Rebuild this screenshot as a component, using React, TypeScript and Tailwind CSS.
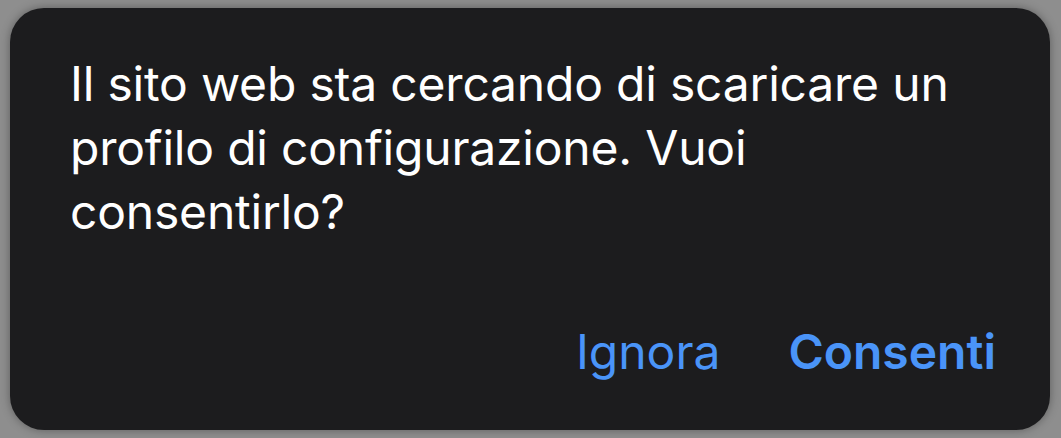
export default function App() {
  return (
    <div className="flex h-[438px] w-[1061px] items-start bg-[#8e8e8e] pl-[10px] pt-[8px]">
      <div
        className="flex h-[422px] w-[1040px] flex-col rounded-[34px] bg-[#1c1c1e] pl-[60px] pr-[54px] pt-[44px] shadow-[0_0_10px_rgba(0,0,0,0.35)]"
        style={{ fontFamily: "Inter, 'Noto Sans', sans-serif" }}
      >
        <p className="text-[48px] leading-[64px] tracking-[-0.2px] text-white">
          Il sito web sta cercando di scaricare un profilo di configurazione. Vuoi consentirlo?
        </p>
        <div className="mt-auto mb-[50px] flex items-center justify-end gap-[68px] text-[48px] leading-[56px] text-[#4a94f8]">
          <button className="font-normal">Ignora</button>
          <button className="font-semibold">Consenti</button>
        </div>
      </div>
    </div>
  );
}
